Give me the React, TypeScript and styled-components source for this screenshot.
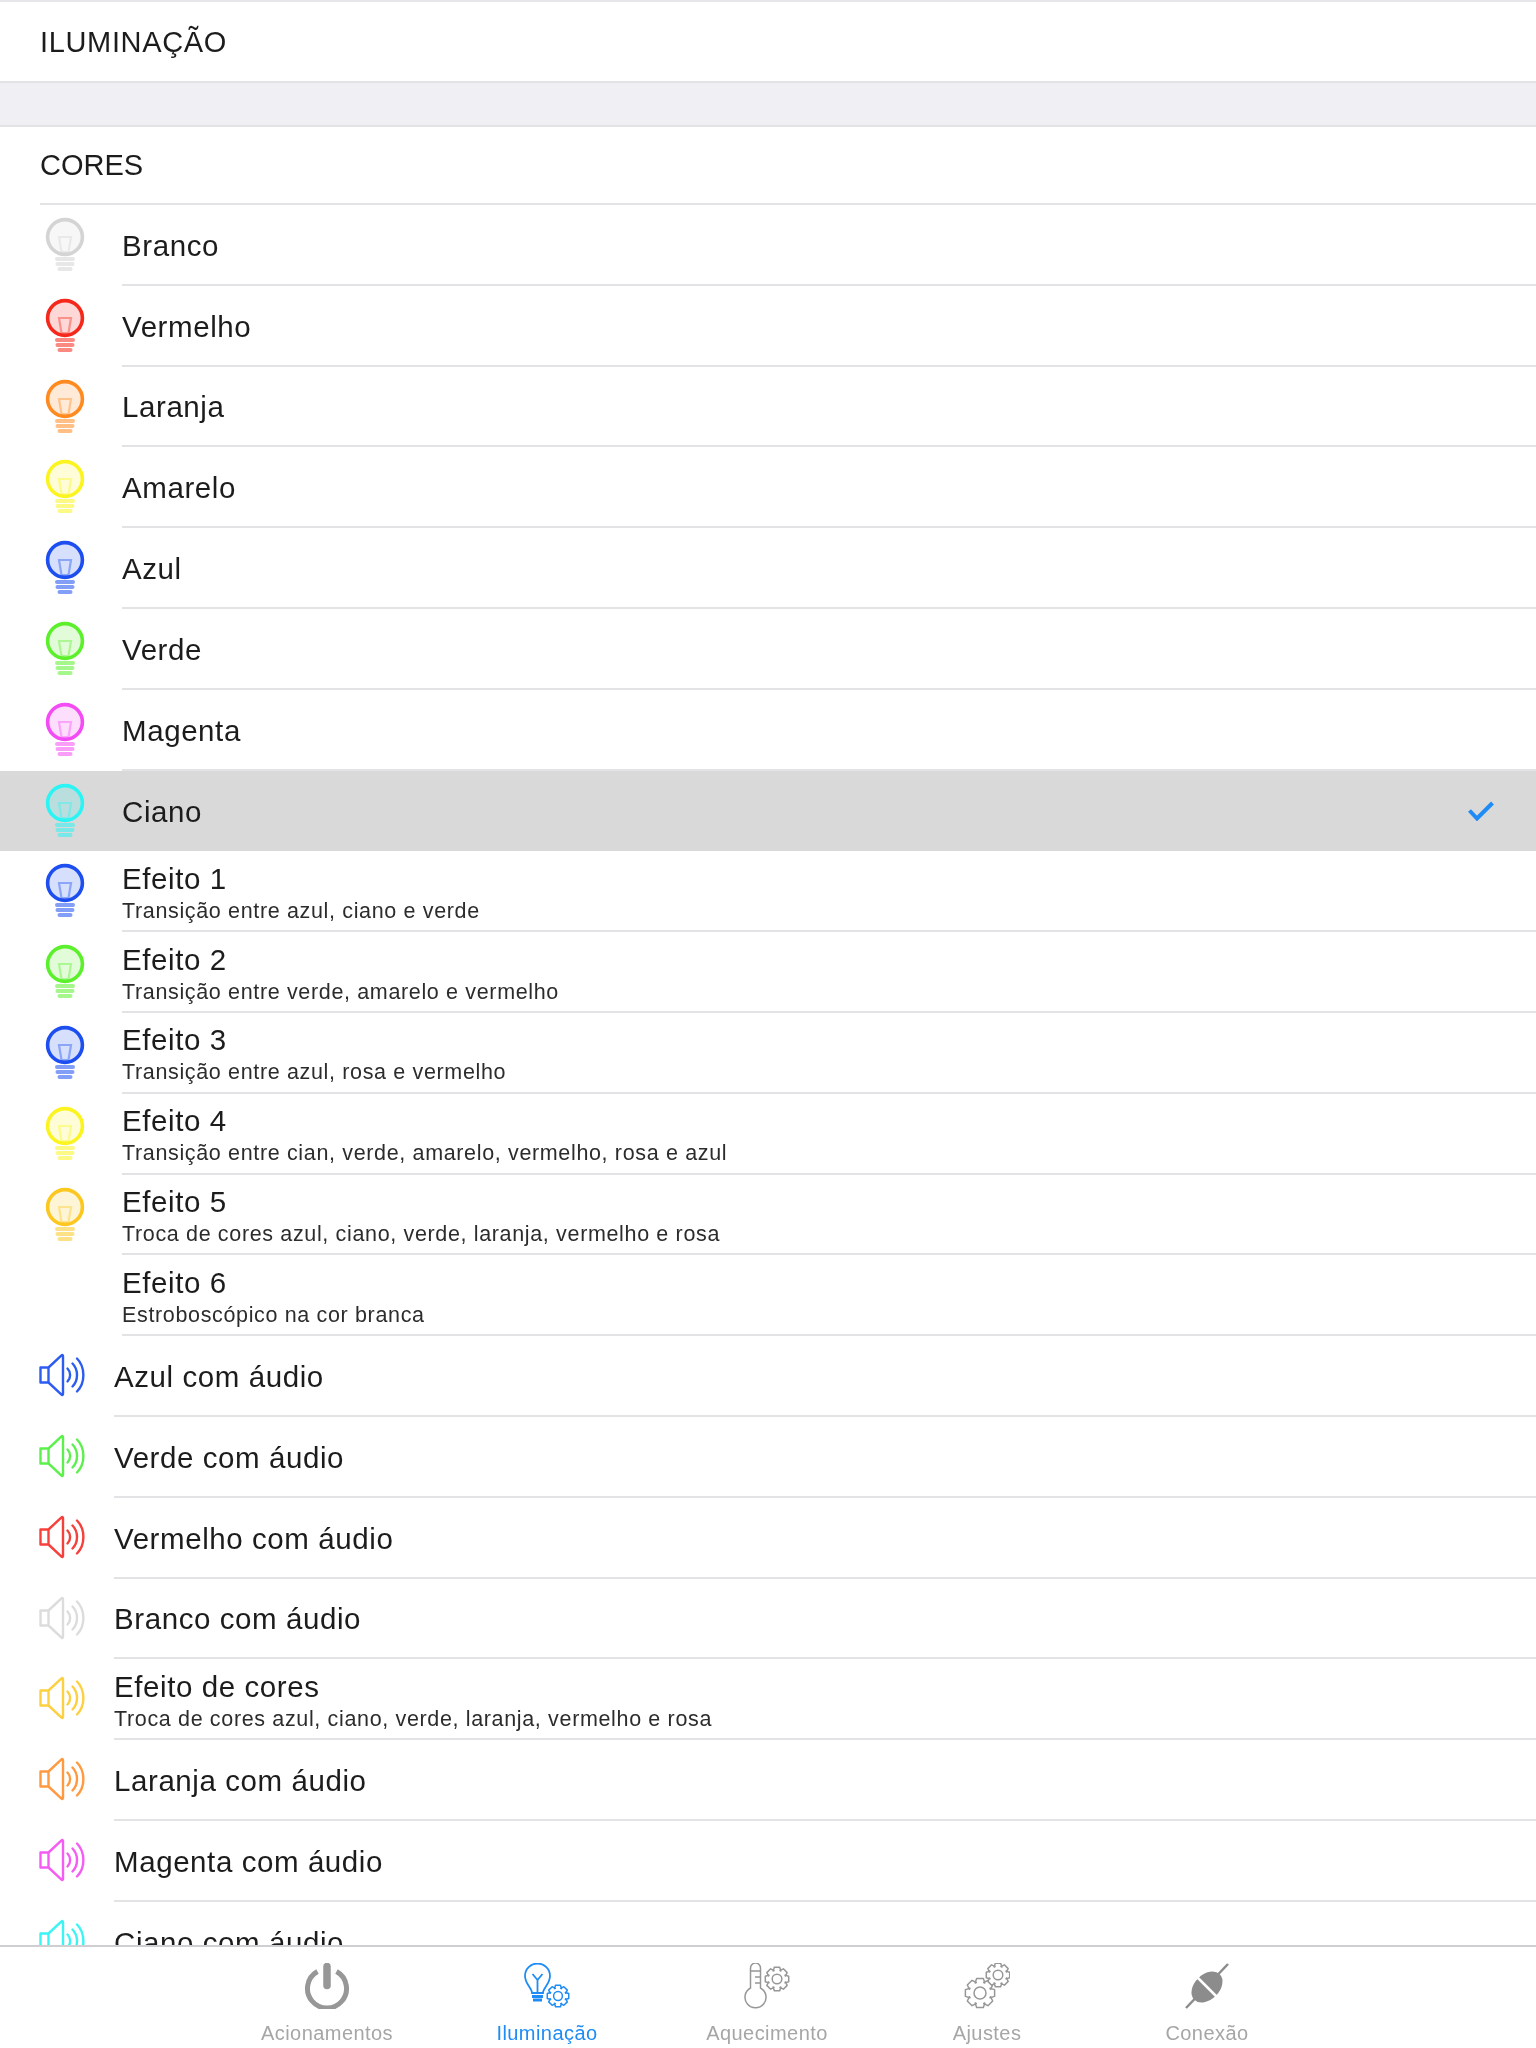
import React from "react";
import styled, { createGlobalStyle } from "styled-components";

const GlobalStyle = createGlobalStyle`
  html, body {
    margin: 0;
    padding: 0;
    background: #fff;
    font-family: "Liberation Sans", Arial, sans-serif;
  }
`;

// the reference is an upscaled capture, everything in it is slightly soft
const Screen = styled.div`
  width: 1536px;
  height: 2048px;
  display: flex;
  flex-direction: column;
  overflow: hidden;
  background: #fff;
  border-top: 2px solid #e6e6ea;
  box-sizing: border-box;
  filter: blur(0.45px);
`;

const Scroller = styled.div`
  flex: 1;
  min-height: 0;
  overflow: hidden;
`;

const TitleRow = styled.div`
  height: 79px;
  box-sizing: border-box;
  display: flex;
  align-items: center;
  padding: 2px 0 0 40px;
  font-size: 29px;
  letter-spacing: 0.65px;
  color: #1c1c1c;
`;

const Spacer = styled.div`
  height: 42px;
  background: #efeff4;
  border-top: 2px solid #e3e3e6;
  border-bottom: 2px solid #e3e3e6;
`;

const SectionRow = styled.div`
  height: 76px;
  margin-left: 40px;
  display: flex;
  align-items: center;
  font-size: 29px;
  color: #1c1c1c;
  border-bottom: 2px solid #e3e3e6;
`;

const Row = styled.div<{ $selected?: boolean }>`
  height: 80.8px;
  box-sizing: border-box;
  display: flex;
  align-items: stretch;
  background: ${(p) => (p.$selected ? "#d9d9d9" : "#fff")};
`;

const IconSlot = styled.div<{ $audio?: boolean }>`
  width: ${(p) => (p.$audio ? "114px" : "122px")};
  flex-shrink: 0;
  padding-left: ${(p) => (p.$audio ? "39px" : "44px")};
  padding-top: ${(p) => (p.$audio ? "17px" : "12px")};
  box-sizing: border-box;
`;

const RowBody = styled.div<{ $selected?: boolean }>`
  flex: 1;
  min-width: 0;
  display: flex;
  align-items: center;
  justify-content: space-between;
  padding-right: 42px;
  border-bottom: ${(p) => (p.$selected ? "none" : "2px solid #e3e3e6")};
`;

const RowText = styled.div`
  display: flex;
  flex-direction: column;
  padding-top: 3px;
`;

const RowLabel = styled.span`
  font-size: 29.5px;
  line-height: 36px;
  letter-spacing: 0.58px;
  color: #1c1c1c;
`;

const RowNote = styled.span`
  margin-top: 1px;
  font-size: 21.5px;
  line-height: 26px;
  letter-spacing: 0.65px;
  color: #2c2c2c;
`;

const TabBar = styled.nav`
  height: 103px;
  flex-shrink: 0;
  box-sizing: border-box;
  display: flex;
  justify-content: center;
  padding: 0 108px 0 106px;
  background: #fff;
  border-top: 2px solid #cfcfd2;
`;

const Tab = styled.div<{ $active?: boolean }>`
  width: 220px;
  display: flex;
  flex-direction: column;
  align-items: center;
  justify-content: flex-end;
  padding-bottom: 1px;
  color: ${(p) => (p.$active ? "#1f8cf5" : "#979797")};
`;

const TabIcon = styled.div`
  height: 66px;
  display: flex;
  align-items: center;
  justify-content: center;
`;

const TabLabel = styled.span<{ $active?: boolean }>`
  font-size: 20px;
  line-height: 28px;
  letter-spacing: 0.45px;
  color: ${(p) => (p.$active ? "#1f8cf5" : "#a6a6a6")};
`;

const Bulb = ({ color }: { color: string }) => (
  <svg width="42" height="58" viewBox="0 0 42 58">
    <circle cx="21" cy="20" r="17.4" fill={color} fillOpacity="0.18" stroke={color} strokeWidth="3.6" />
    <path d="M15 20h12l-2.5 15h-7z" fill="none" stroke={color} strokeOpacity="0.4" strokeWidth="2.200" />
    <path d="M13 42h16M13.500 47h15M15.500 52h11" stroke={color} strokeOpacity="0.55" strokeWidth="4" strokeLinecap="round" />
  </svg>
);

const Speaker = ({ color }: { color: string }) => (
  <svg width="48" height="44" viewBox="0 0 48 44">
    <path
      d="M1.500 14.500h8v15h-8zM9.500 14.500 22.500 2.300c.7-.7 1.500-.3 1.500.6v38.200c0 .9-.8 1.300-1.500.6L9.500 29.500"
      fill="none"
      stroke={color}
      strokeWidth="2.400"
      strokeLinejoin="round"
    />
    <path
      d="M28.500 15.500c3.500 3.500 3.500 9.500 0 13M33.500 10.500c6 6 6 17 0 23M38 5.500c8.500 8.500 8.500 24.500 0 33"
      fill="none"
      stroke={color}
      strokeWidth="2.400"
      strokeLinecap="round"
    />
  </svg>
);

const gearPath = (cx: number, cy: number, r: number) => {
  const pts: string[] = [];
  for (let i = 0; i < 8; i++) {
    const a = (i * Math.PI) / 4;
    const step = Math.PI / 14;
    const rr = r * 0.74;
    const p = (ang: number, rad: number) =>
      `${(cx + Math.cos(ang) * rad).toFixed(2)} ${(cy + Math.sin(ang) * rad).toFixed(2)}`;
    pts.push(p(a - step * 2, rr), p(a - step, r), p(a + step, r), p(a + step * 2, rr));
  }
  return `M${pts.join("L")}Z`;
};

const Gear = ({ cx, cy, r, solid }: { cx: number; cy: number; r: number; solid?: boolean }) => (
  <>
    <path
      d={gearPath(cx, cy, r)}
      fill={solid ? "#fff" : "none"}
      stroke="currentColor"
      strokeWidth="1.500"
      strokeLinejoin="round"
    />
    <circle cx={cx} cy={cy} r={r * 0.4} fill="none" stroke="currentColor" strokeWidth="1.500" />
  </>
);

const PowerIcon = () => (
  <svg width="46" height="46" viewBox="0 0 46 46" fill="none" stroke="currentColor">
    <path d="M13.500 8.500a19.500 19.500 0 1 0 19 0" strokeWidth="5" />
    <path d="M23 3.500v19" strokeWidth="7.500" strokeLinecap="round" />
  </svg>
);

const BulbGearIcon = () => (
  <svg width="46" height="46" viewBox="0 0 46 46" fill="none" stroke="currentColor" strokeWidth="1.800">
    <path d="M8 30c0-5-7-9-7-17a12.500 12.500 0 0 1 25 0c0 8-7 12-7 17z" />
    <path d="M8 33.500h11M9 37h9" strokeWidth="2.800" />
    <path d="M13.500 30V17l-5-6M13.500 17l5-6" />
    <Gear cx={34} cy={33} r={11} />
  </svg>
);

const ThermoGearIcon = () => (
  <svg width="46" height="46" viewBox="0 0 46 46" fill="none" stroke="currentColor" strokeWidth="1.500">
    <path d="M6.500 25V5a5 5 0 0 1 10 0v20a10.500 10.500 0 1 1-10 0z" />
    <path d="M6.500 8h10M11 14h5.500M11 20h5.500" />
    <Gear cx={33} cy={16} r={12} />
  </svg>
);

const GearsIcon = () => (
  <svg width="46" height="46" viewBox="0 0 46 46">
    <Gear cx={16} cy={30} r={15} />
    <Gear cx={34} cy={12} r={12} solid />
  </svg>
);

const PlugIcon = () => (
  <svg width="46" height="46" viewBox="0 0 46 46" fill="none">
    <path d="M2 45 44 1" stroke="#8c8c8c" strokeWidth="2.500" />
    <ellipse cx="23" cy="24" rx="18" ry="12.500" transform="rotate(-45 23 24)" fill="#8c8c8c" />
    <path d="M12 13l21 21" stroke="#fff" strokeWidth="2.500" />
  </svg>
);

const CheckIcon = () => (
  <svg width="26" height="20" viewBox="0 0 26 20" fill="none" stroke="#1f8cf5" strokeWidth="4">
    <path d="M1.500 9.500l7.500 8L24.500 2" />
  </svg>
);

type Item = { label: string; note?: string; color?: string; audio?: boolean; selected?: boolean };

const TROCA = "Troca de cores azul, ciano, verde, laranja, vermelho e rosa";

const items: Item[] = [
  { label: "Branco", color: "#d4d4d4" },
  { label: "Vermelho", color: "#f5281c" },
  { label: "Laranja", color: "#ff8a20" },
  { label: "Amarelo", color: "#fcf420" },
  { label: "Azul", color: "#1c4ef0" },
  { label: "Verde", color: "#5cf02c" },
  { label: "Magenta", color: "#f44cf4" },
  { label: "Ciano", color: "#2cf4f4", selected: true },
  { label: "Efeito 1", note: "Transição entre azul, ciano e verde", color: "#1c4ef0" },
  { label: "Efeito 2", note: "Transição entre verde, amarelo e vermelho", color: "#5cf02c" },
  { label: "Efeito 3", note: "Transição entre azul, rosa e vermelho", color: "#1c4ef0" },
  { label: "Efeito 4", note: "Transição entre cian, verde, amarelo, vermelho, rosa e azul", color: "#fcf420" },
  { label: "Efeito 5", note: TROCA, color: "#fcc820" },
  { label: "Efeito 6", note: "Estroboscópico na cor branca" },
  { label: "Azul com áudio", color: "#2c5cf0", audio: true },
  { label: "Verde com áudio", color: "#5cf04c", audio: true },
  { label: "Vermelho com áudio", color: "#f5403c", audio: true },
  { label: "Branco com áudio", color: "#dcdcdc", audio: true },
  { label: "Efeito de cores", note: TROCA, color: "#fcd040", audio: true },
  { label: "Laranja com áudio", color: "#ff9a40", audio: true },
  { label: "Magenta com áudio", color: "#f45cf4", audio: true },
  { label: "Ciano com áudio", color: "#3cf4f4", audio: true },
];

const tabs = [
  { label: "Acionamentos", icon: <PowerIcon /> },
  { label: "Iluminação", icon: <BulbGearIcon />, active: true },
  { label: "Aquecimento", icon: <ThermoGearIcon /> },
  { label: "Ajustes", icon: <GearsIcon /> },
  { label: "Conexão", icon: <PlugIcon /> },
];

const App = () => (
  <Screen>
    <GlobalStyle />
    <Scroller>
      <TitleRow>ILUMINAÇÃO</TitleRow>
      <Spacer />
      <SectionRow>CORES</SectionRow>
      {items.map((item) => (
        <Row key={item.label} $selected={item.selected}>
          <IconSlot $audio={item.audio}>
            {item.color && (item.audio ? <Speaker color={item.color} /> : <Bulb color={item.color} />)}
          </IconSlot>
          <RowBody $selected={item.selected}>
            <RowText>
              <RowLabel>{item.label}</RowLabel>
              {item.note && <RowNote>{item.note}</RowNote>}
            </RowText>
            {item.selected && <CheckIcon />}
          </RowBody>
        </Row>
      ))}
    </Scroller>
    <TabBar>
      {tabs.map((tab) => (
        <Tab key={tab.label} $active={tab.active}>
          <TabIcon>{tab.icon}</TabIcon>
          <TabLabel $active={tab.active}>{tab.label}</TabLabel>
        </Tab>
      ))}
    </TabBar>
  </Screen>
);

export default App;
